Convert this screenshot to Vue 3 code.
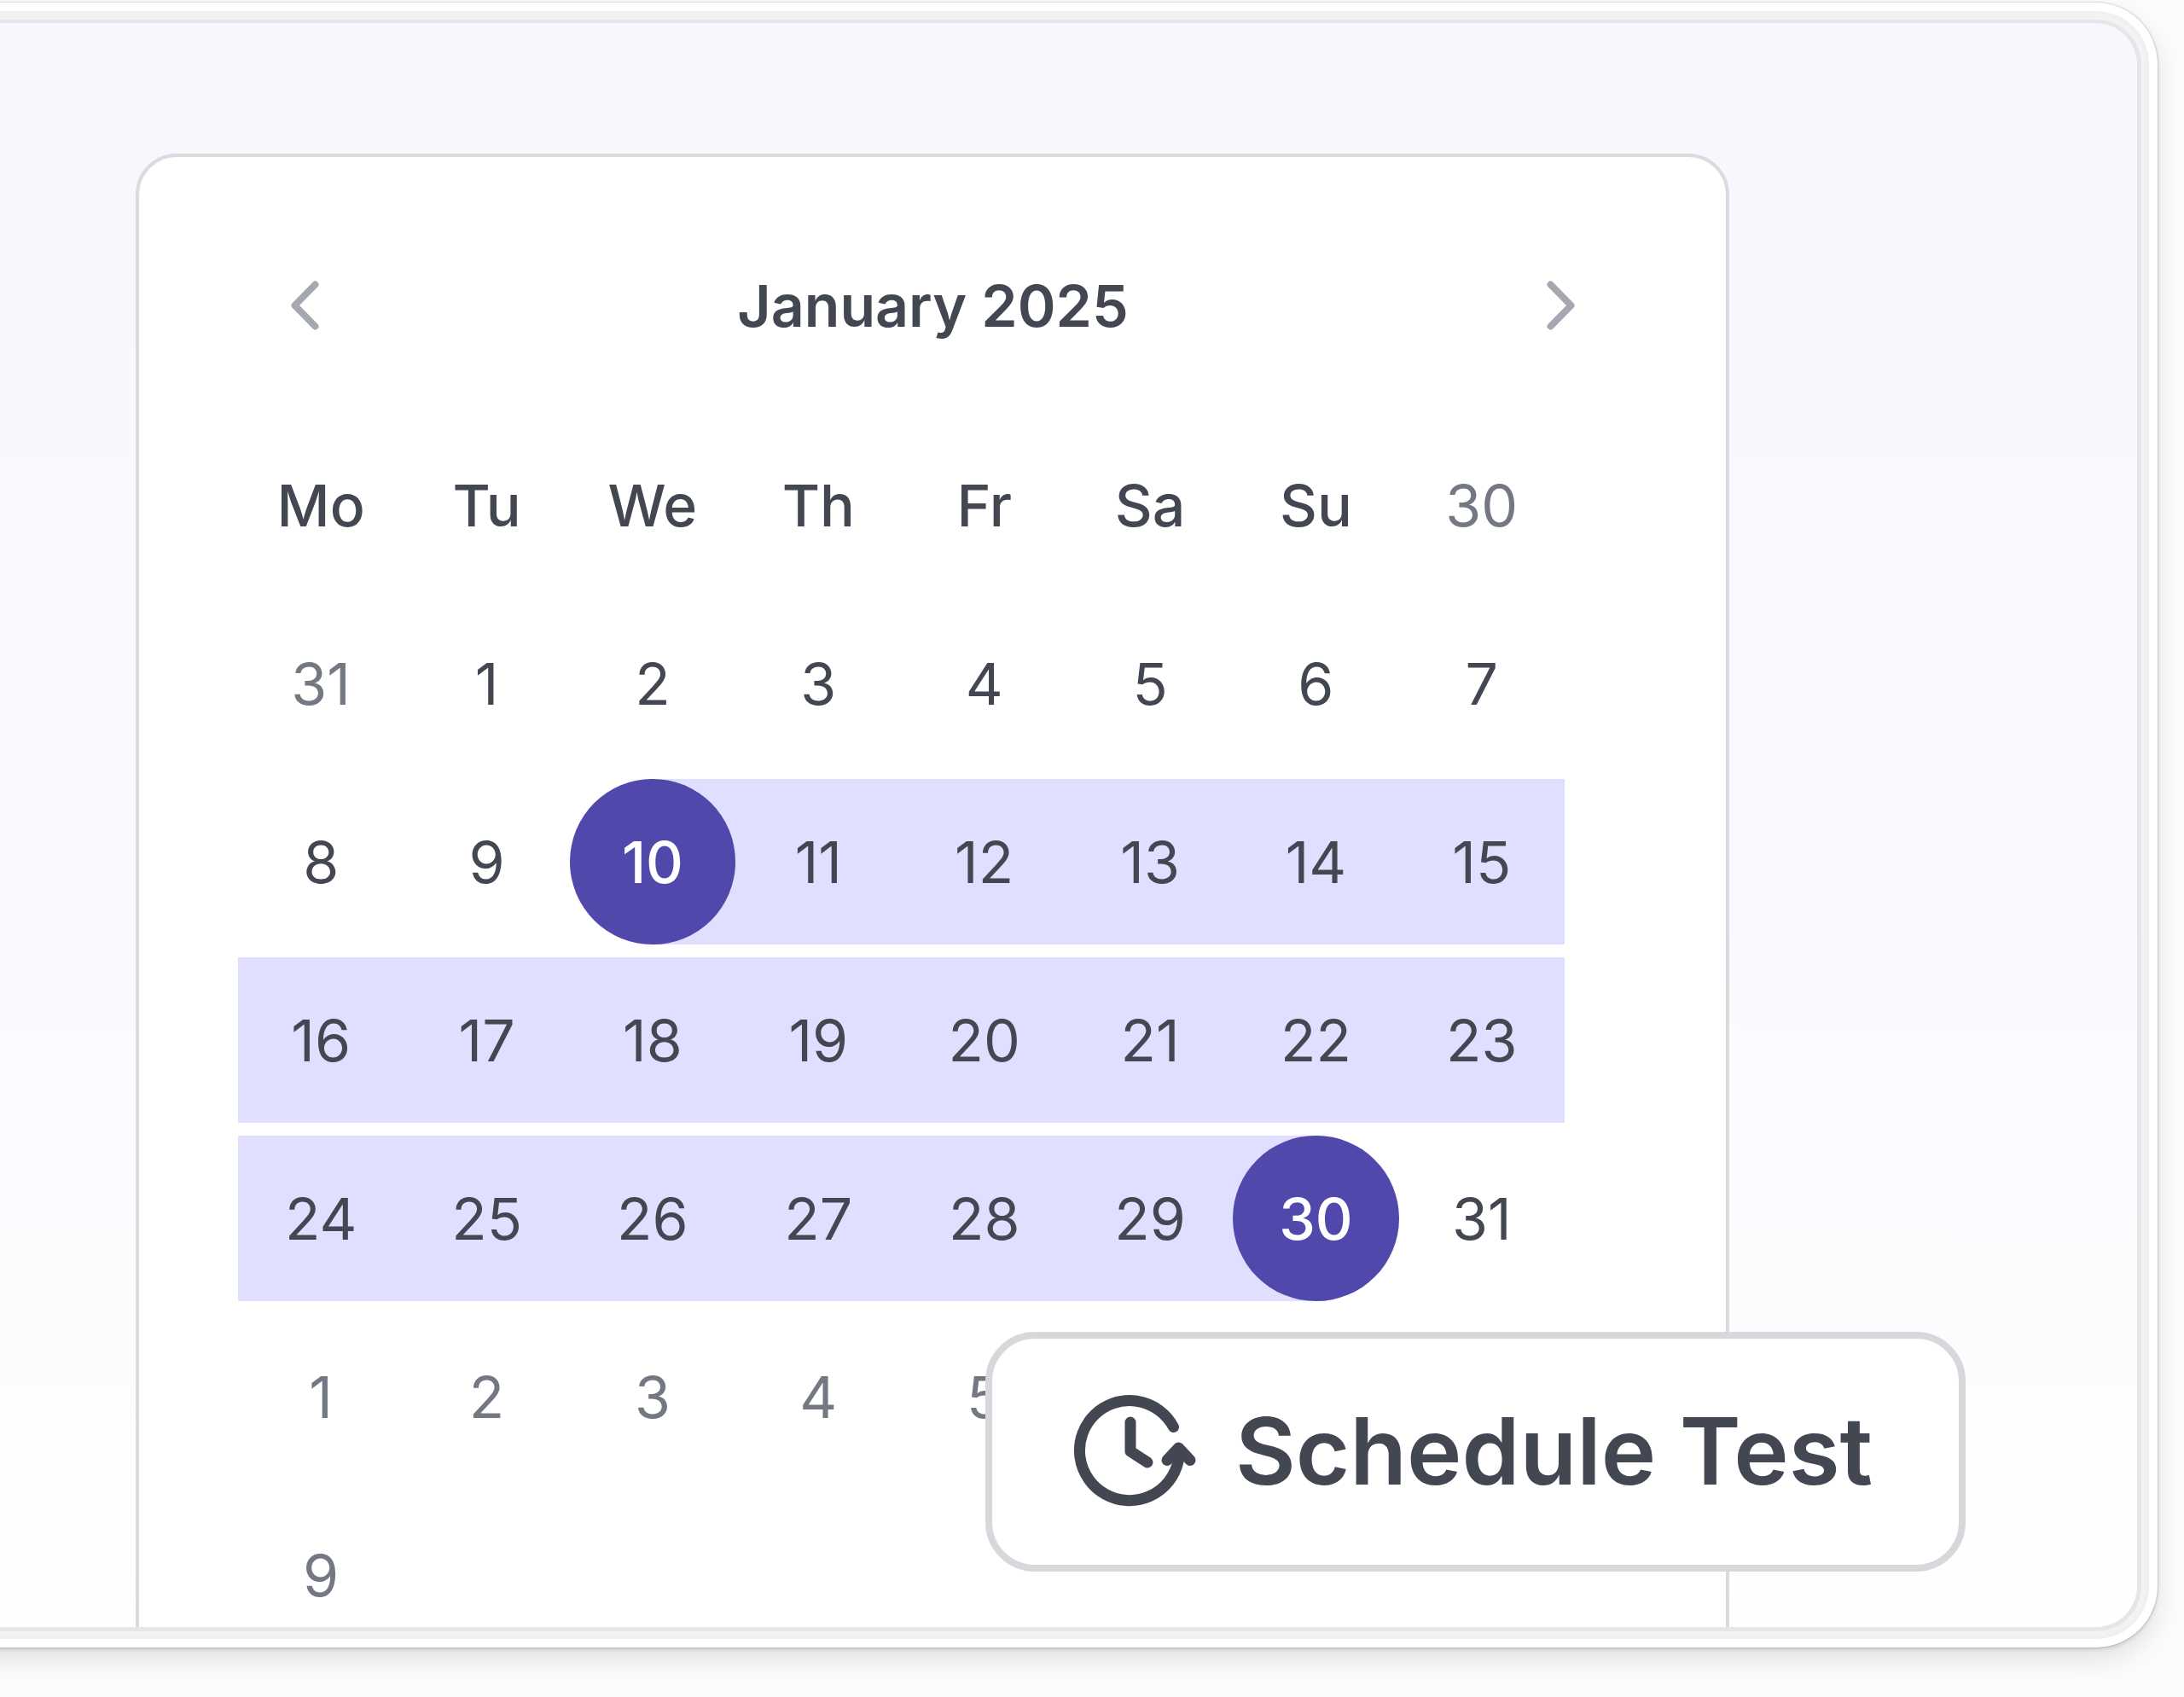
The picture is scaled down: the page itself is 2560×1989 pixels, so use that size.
<script setup>
const weekdays = ['Mo', 'Tu', 'We', 'Th', 'Fr', 'Sa', 'Su']

const rangeStart = 10
const rangeEnd = 30

// A cell belongs to the shown month unless it is marked as outside.
const inside = (day) => ({
  day,
  start: day === rangeStart,
  end: day === rangeEnd,
  range: day > rangeStart && day < rangeEnd,
})
const outside = (day) => ({ day, muted: true })
const span = (from, to, make) =>
  Array.from({ length: to - from + 1 }, (_, i) => make(from + i))

const weeks = [
  [outside(31), ...span(1, 7, inside)],
  span(8, 15, inside),
  span(16, 23, inside),
  span(24, 31, inside),
  span(1, 5, outside),
  [outside(9)],
]
</script>

<template>
  <div class="page">
    <div class="frame">
      <div class="ring">
        <main class="screen">
          <section class="card">
            <header class="head">
              <button class="nav" type="button" aria-label="Previous month">
                <svg width="32" height="58" viewBox="0 0 32 58" aria-hidden="true">
                  <path d="M28.5 4.5 4.5 29 28.5 53.5" />
                </svg>
              </button>
              <h1 class="title">January 2025</h1>
              <button class="nav" type="button" aria-label="Next month">
                <svg width="32" height="58" viewBox="0 0 32 58" aria-hidden="true">
                  <path d="M3.5 4.5 27.5 29 3.5 53.5" />
                </svg>
              </button>
            </header>
            <table class="grid">
              <thead>
                <tr>
                  <th v-for="name in weekdays" :key="name" scope="col">{{ name }}</th>
                  <td class="muted"><button class="day" type="button">30</button></td>
                </tr>
              </thead>
              <tbody>
                <tr v-for="(week, w) in weeks" :key="w">
                  <td
                    v-for="cell in week"
                    :key="cell.day"
                    :class="{ muted: cell.muted, range: cell.range, start: cell.start, end: cell.end }"
                  >
                    <button class="day" type="button">{{ cell.day }}</button>
                  </td>
                </tr>
              </tbody>
            </table>
          </section>
          <button class="schedule" type="button">
            <svg width="142" height="130" viewBox="0 0 142 130" aria-hidden="true">
              <path d="M115.5 37.5A58.5 58.5 0 1 0 121 78L121.500 63" />
              <path d="M108 76.5 121.500 62 135 76.5" />
              <path d="M65 32V66L85 79" />
            </svg>
            <span>Schedule Test</span>
          </button>
        </main>
      </div>
    </div>
  </div>
</template>

<style>
body {
  margin: 0;
  background: #fcfcfc;
}
</style>

<style scoped>
.page {
  overflow: hidden;
  padding: 3px 31px 58px 0;
  font-family: Inter, "Liberation Sans", sans-serif;
  color: #434751;
}

/* The window runs off the left side of the page. */
.frame {
  margin-left: -120px;
  padding: 10px;
  border-radius: 72px;
  background: #fff;
  box-shadow:
    0 0 2px rgba(0, 0, 0, 0.3),
    0 2px 5px rgba(0, 0, 0, 0.14),
    0 14px 32px rgba(0, 0, 0, 0.11);
}

.ring {
  padding: 10px 9px 9px;
  border-radius: 62px;
  background: #f3f3f3;
  box-shadow: inset 0 0 8px rgba(0, 0, 0, 0.04);
}

.screen {
  position: relative;
  overflow: hidden;
  padding: 153px 478px 0 255px;
  border: 5px solid #e4e6e8;
  border-top-width: 4px;
  border-radius: 53px;
  background: linear-gradient(#f8f7fe, #f9f9ff 55%, #fff);
}

.card {
  box-sizing: border-box;
  margin-bottom: -55px;
  padding: 116px 189px 0 116px;
  border: 4px solid #dadbdc;
  border-radius: 48px;
  background: #fff;
}

.head {
  display: flex;
  align-items: center;
  justify-content: space-between;
  height: 116px;
  margin: 0 -12px 64px 62px;
}

.title {
  margin: 0;
  font-size: 68px;
  font-weight: 600;
  line-height: 84px;
}

button {
  margin: 0;
  padding: 0;
  border: 0;
  background: none;
  color: inherit;
  font: inherit;
  cursor: pointer;
}

svg {
  display: block;
  overflow: visible;
  fill: none;
  stroke: currentColor;
  stroke-linecap: round;
  stroke-linejoin: round;
}

.nav {
  color: #a5a8b0;
}

.nav svg {
  stroke-width: 8px;
}

.grid {
  width: 100%;
  table-layout: fixed;
  border-collapse: separate;
  border-spacing: 0 15px;
}

th,
td {
  box-sizing: border-box;
  height: 194px;
  padding: 0;
  text-align: center;
  vertical-align: middle;
  font-size: 68px;
  font-weight: 400;
  line-height: 84px;
}

th {
  font-weight: 500;
}

.muted {
  color: #737883;
}

.day {
  display: block;
  width: 100%;
  height: 194px;
}

.range {
  background: #e1dfff;
}

.start {
  background: linear-gradient(to right, transparent 50%, #e1dfff 50%);
}

.end {
  background: linear-gradient(to left, transparent 50%, #e1dfff 50%);
}

.start .day,
.end .day {
  border-radius: 50%;
  background: #5048aa;
  color: #fff;
  font-weight: 500;
}

.schedule {
  position: absolute;
  right: 201px;
  bottom: 65px;
  display: flex;
  align-items: center;
  gap: 46px;
  height: 281px;
  padding: 0 101px 4px 97px;
  border: 8px solid #d6d8dc;
  border-radius: 58px;
  background: #fff;
  font-size: 109px;
  font-weight: 600;
  line-height: 130px;
  white-space: nowrap;
}

.schedule svg {
  stroke-width: 13px;
}
</style>
